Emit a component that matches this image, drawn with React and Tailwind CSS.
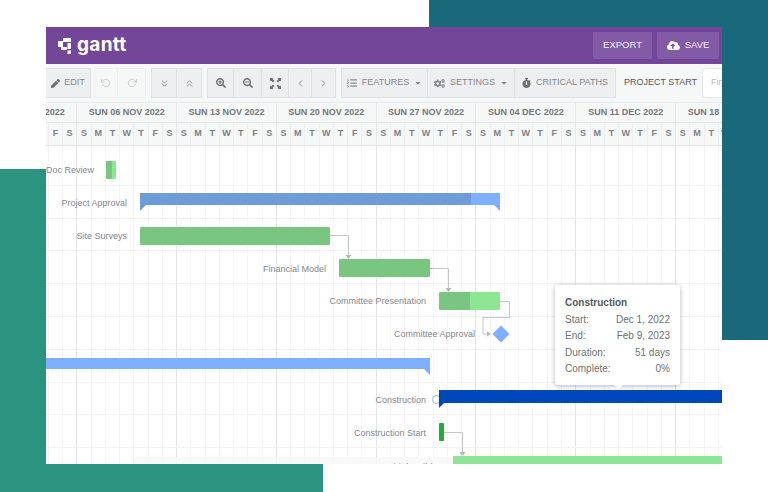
import { FaPen, FaCloudUploadAlt, FaSearchPlus, FaSearchMinus, FaCaretDown, FaCogs, FaListOl, FaStopwatch } from 'react-icons/fa';
import { FiRotateCcw, FiRotateCw, FiChevronsDown, FiChevronsUp, FiChevronLeft, FiChevronRight } from 'react-icons/fi';

const weeks = ['SUN 30 OCT 2022', 'SUN 06 NOV 2022', 'SUN 13 NOV 2022', 'SUN 20 NOV 2022', 'SUN 27 NOV 2022', 'SUN 04 DEC 2022', 'SUN 11 DEC 2022', 'SUN 18 DEC 2022'];
const days = ['S', 'M', 'T', 'W', 'T', 'F', 'S'];

const Logo = () => (
  <svg width="13" height="16" viewBox="0 0 13 16" fill="#ffffff">
    <path d="M5 0H13V4H5V9H9V12H3V9H0V3H5Z" />
    <rect x="9.500" y="5" width="3.500" height="6" />
    <rect x="9.500" y="12.500" width="3.500" height="3.500" />
  </svg>
);

const FitIcon = () => (
  <svg width="11" height="11" viewBox="0 0 11 11" fill="#6b7075">
    <path d="M0 0h3.500l-1 1 2 2-1.500 1.500-2-2-1 1z" />
    <path d="M11 0v3.500l-1-1-2 2-1.500-1.500 2-2-1-1z" />
    <path d="M0 11v-3.500l1 1 2-2 1.500 1.500-2 2 1 1z" />
    <path d="M11 11h-3.500l1-1-2-2 1.500-1.500 2 2 1-1z" />
  </svg>
);

const toolBtn = 'flex shrink-0 items-center justify-center h-[30px] bg-[#eeeff0] border border-[#dfe1e3] text-[#85898d] text-[9px]';

const Toolbar = () => (
  <div className="flex items-center h-[39px] bg-[#f6f7f7] border-b border-[#e9eaeb] whitespace-nowrap overflow-hidden">
    <div className={`${toolBtn} w-[45px] gap-1 border-l-0`}>
      <FaPen className="w-[9px] h-[9px] text-[#6b7075]" />
      EDIT
    </div>
    <div className="flex shrink-0 ml-[3px]">
      <div className="flex items-center justify-center w-[24px] h-[30px] border border-[#eeeff0] text-[#c4c6c9]"><FiRotateCcw className="w-[10px] h-[10px]" /></div>
      <div className="flex items-center justify-center w-[28px] h-[30px] border border-l-0 border-[#eeeff0] text-[#c4c6c9]"><FiRotateCw className="w-[10px] h-[10px]" /></div>
    </div>
    <div className="flex shrink-0 ml-[5px]">
      <div className={`${toolBtn} w-[26px]`}><FiChevronsDown className="w-[11px] h-[11px]" /></div>
      <div className={`${toolBtn} w-[25px] border-l-0`}><FiChevronsUp className="w-[11px] h-[11px]" /></div>
    </div>
    <div className="flex shrink-0 ml-[5px]">
      <div className={`${toolBtn} w-[27px]`}><FaSearchPlus className="w-[10px] h-[10px] text-[#6b7075]" /></div>
      <div className={`${toolBtn} w-[28px] border-l-0`}><FaSearchMinus className="w-[10px] h-[10px] text-[#6b7075]" /></div>
      <div className={`${toolBtn} w-[27px] border-l-0`}><FitIcon /></div>
      <div className={`${toolBtn} w-[23px] border-l-0`}><FiChevronLeft className="w-[11px] h-[11px]" /></div>
      <div className={`${toolBtn} w-[24px] border-l-0`}><FiChevronRight className="w-[11px] h-[11px]" /></div>
    </div>
    <div className="flex shrink-0 ml-[5px]">
      <div className={`${toolBtn} w-[87px] gap-[5px]`}>
        <FaListOl className="w-[10px] h-[10px]" />
        FEATURES
        <FaCaretDown className="w-[8px] h-[8px]" />
      </div>
      <div className={`${toolBtn} w-[87px] gap-[5px] border-l-0`}>
        <FaCogs className="w-[11px] h-[11px]" />
        SETTINGS
        <FaCaretDown className="w-[8px] h-[8px]" />
      </div>
      <div className={`${toolBtn} w-[101px] gap-[5px] border-l-0`}>
        <FaStopwatch className="w-[9px] h-[10px] text-[#6b7075]" />
        CRITICAL PATHS
      </div>
    </div>
    <div className="ml-[8px] w-[78px] shrink-0 text-[9px] text-[#555a5f]">PROJECT START</div>
    <div className="flex shrink-0 items-center w-[40px] h-[30px] pl-2 bg-white border border-[#e6e7e8] rounded-l-sm text-[9px] text-[#b5b7ba]">Find</div>
  </div>
);

const TimeHeader = () => (
  <div className="overflow-hidden h-[43px] bg-[#f6f7f7] border-b border-[#e3e4e6]">
    <div className="flex -ml-[68.5px] w-max">
      {weeks.map((w) => (
        <div key={w} className="w-[99.8px] shrink-0 border-r border-[#e6e7e8]">
          <div className="flex items-center justify-center h-[20px] border-b border-[#e6e7e8] text-[9px] font-bold text-[#74787c] whitespace-nowrap">{w}</div>
          <div className="flex h-[22px]">
            {days.map((d, i) => (
              <div key={i} className="flex-1 flex items-center justify-center border-r border-[#eeeff0] last:border-r-0 text-[9px] font-bold text-[#7d8185]">{d}</div>
            ))}
          </div>
        </div>
      ))}
    </div>
  </div>
);

const Grid = () => (
  <div className="absolute inset-0 overflow-hidden">
    <div className="flex -ml-[68.5px] h-full w-max">
      {weeks.map((w) => (
        <div key={w} className="flex w-[99.8px] h-full shrink-0 border-r border-[#e4e5e7]">
          {days.map((d, i) => (
            <div key={i} className="flex-1 border-r border-[#f5f5f6] last:border-r-0" />
          ))}
        </div>
      ))}
    </div>
    <div className="absolute inset-x-0 top-[7px] flex flex-col">
      {[0, 1, 2, 3, 4, 5, 6, 7, 8, 9].map((n) => (
        <div key={n} className="h-[32.8px] shrink-0 border-b border-[#f1f2f3]" />
      ))}
    </div>
  </div>
);

const Connectors = () => (
  <svg className="absolute inset-0" width="676" height="318" fill="none" stroke="#c5c7ca" strokeWidth="1">
    <path d="M284 89.500h18.500v21" />
    <path d="M384 122.500h18.500v21" />
    <path d="M454 155.500h9.500v16h-26.500v16.500h7" />
    <path d="M398 286.500h18.500v21" />
    <g fill="#b4b7ba" stroke="none">
      <path d="M299.500 109h6l-3 4z" />
      <path d="M399.500 142h6l-3 4z" />
      <path d="M441 185.500v5l4 -2.500z" />
      <path d="M413.500 306h6l-3 4z" />
    </g>
  </svg>
);

const taskLabel = 'absolute text-right whitespace-nowrap text-[9px] leading-[12px] text-[#85888c]';

const Chart = () => (
  <div className="relative flex-1 overflow-hidden bg-white">
    <Grid />
    <Connectors />

    <div className={`${taskLabel} left-0 top-[18px]`}>Doc Review</div>
    <div className="absolute left-[60px] top-[15px] flex w-[10px] h-[18px] rounded-[1px] overflow-hidden">
      <div className="w-[6px] bg-[#78c67f]" />
      <div className="flex-1 bg-[#8ee594]" />
    </div>

    <div className={`${taskLabel} right-[595px] top-[51px]`}>Project Approval</div>
    <div className="absolute left-[94px] top-[47px] flex w-[360px] h-[12px]">
      <div className="w-[331px] bg-[#6f9bd9]" />
      <div className="flex-1 bg-[#7eb0ff]" />
    </div>
    <div className="absolute left-[94px] top-[59px] w-[6px] h-[6px] bg-[#6f9bd9] [clip-path:polygon(0_0,100%_0,0_100%)]" />
    <div className="absolute left-[448px] top-[59px] w-[6px] h-[6px] bg-[#7eb0ff] [clip-path:polygon(0_0,100%_0,100%_100%)]" />

    <div className={`${taskLabel} right-[595px] top-[84px]`}>Site Surveys</div>
    <div className="absolute left-[94px] top-[81px] w-[190px] h-[18px] rounded-[1px] bg-[#78c67f]" />

    <div className={`${taskLabel} right-[396px] top-[117px]`}>Financial Model</div>
    <div className="absolute left-[293px] top-[113px] w-[91px] h-[18px] rounded-[1px] bg-[#78c67f]" />

    <div className={`${taskLabel} right-[296px] top-[149px]`}>Committee Presentation</div>
    <div className="absolute left-[393px] top-[146px] flex w-[61px] h-[18px] rounded-[1px] overflow-hidden">
      <div className="w-[31px] bg-[#78c67f]" />
      <div className="flex-1 bg-[#8ee594]" />
    </div>

    <div className={`${taskLabel} right-[247px] top-[182px]`}>Committee Approval</div>
    <div className="absolute left-[449px] top-[182px] w-[12px] h-[12px] rotate-45 bg-[#7eb0ff]" />

    <div className="absolute left-0 top-[212px] w-[384px] h-[11px] bg-[#7eb0ff]" />
    <div className="absolute left-[378px] top-[223px] w-[6px] h-[6px] bg-[#7eb0ff] [clip-path:polygon(0_0,100%_0,100%_100%)]" />

    <div className={`${taskLabel} right-[296px] top-[248px]`}>Construction</div>
    <div className="absolute left-[386px] top-[249px] w-[9px] h-[9px] rounded-full bg-white border border-[#8fb3f5]" />
    <div className="absolute left-[393px] top-[244px] right-0 h-[13px] bg-[#0047bb]" />
    <div className="absolute left-[393px] top-[257px] w-[5px] h-[5px] bg-[#0047bb] [clip-path:polygon(0_0,100%_0,0_100%)]" />

    <div className={`${taskLabel} right-[296px] top-[281px]`}>Construction Start</div>
    <div className="absolute left-[393px] top-[277px] w-[5px] h-[18px] rounded-[1px] bg-[#22ac38]" />

    <div className="absolute left-[88px] top-[311px] w-[319px] h-[7px] bg-[#f7f8f8]/80" />
    <div className={`${taskLabel} right-[281px] top-[315px] tracking-[0.3px]`}>Initial Build ▸</div>
    <div className="absolute left-[407px] top-[310px] right-0 h-[18px] bg-[#8ee594]" />

    {/* tooltip */}
    <div className="absolute left-[509px] top-[139px] w-[125px] h-[100px] px-[10px] pt-[10px] rounded-[2px] bg-white shadow-[0_1px_5px_rgba(0,0,0,0.3)] text-[10px] leading-[16.500px] text-[#6e7276]">
      <div className="font-bold text-[#55595e]">Construction</div>
      <div className="flex justify-between"><span>Start:</span><span>Dec 1, 2022</span></div>
      <div className="flex justify-between"><span>End:</span><span>Feb 9, 2023</span></div>
      <div className="flex justify-between"><span>Duration:</span><span>51 days</span></div>
      <div className="flex justify-between"><span>Complete:</span><span>0%</span></div>
      <div className="absolute left-[60px] bottom-[-3px] w-[7px] h-[7px] rotate-45 bg-white" />
    </div>
  </div>
);

export default function App() {
  return (
    <div className="relative w-[768px] h-[492px] overflow-hidden bg-white font-['Liberation_Sans',sans-serif]">
      <div className="absolute left-[429px] top-0 w-[339px] h-[340px] bg-[#19697a]" />
      <div className="absolute left-0 top-[169px] w-[323px] h-[323px] bg-[#2c9380]" />

      <div className="relative flex flex-col ml-[46px] mt-[27px] w-[676px] h-[437px] overflow-hidden bg-white">
        <div className="flex items-center justify-between h-[37px] pl-[12px] pr-[3px] bg-[#744699]">
          <div className="flex items-center gap-[6px]">
            <Logo />
            <span className="text-[19px] leading-none font-bold tracking-[0.3px] text-white font-['Inter',sans-serif] -mt-[3px]">gantt</span>
          </div>
          <div className="flex gap-[5px] text-[9.500px] text-[#f1ebf5]">
            <div className="flex items-center justify-center w-[59px] h-[27px] bg-[#835aa5] rounded-[1px]">EXPORT</div>
            <div className="flex items-center justify-center gap-[5px] w-[62px] h-[27px] bg-[#835aa5] rounded-[1px]">
              <FaCloudUploadAlt className="w-[13px] h-[13px] text-white" />
              SAVE
            </div>
          </div>
        </div>
        <Toolbar />
        <TimeHeader />
        <Chart />
      </div>
    </div>
  );
}
